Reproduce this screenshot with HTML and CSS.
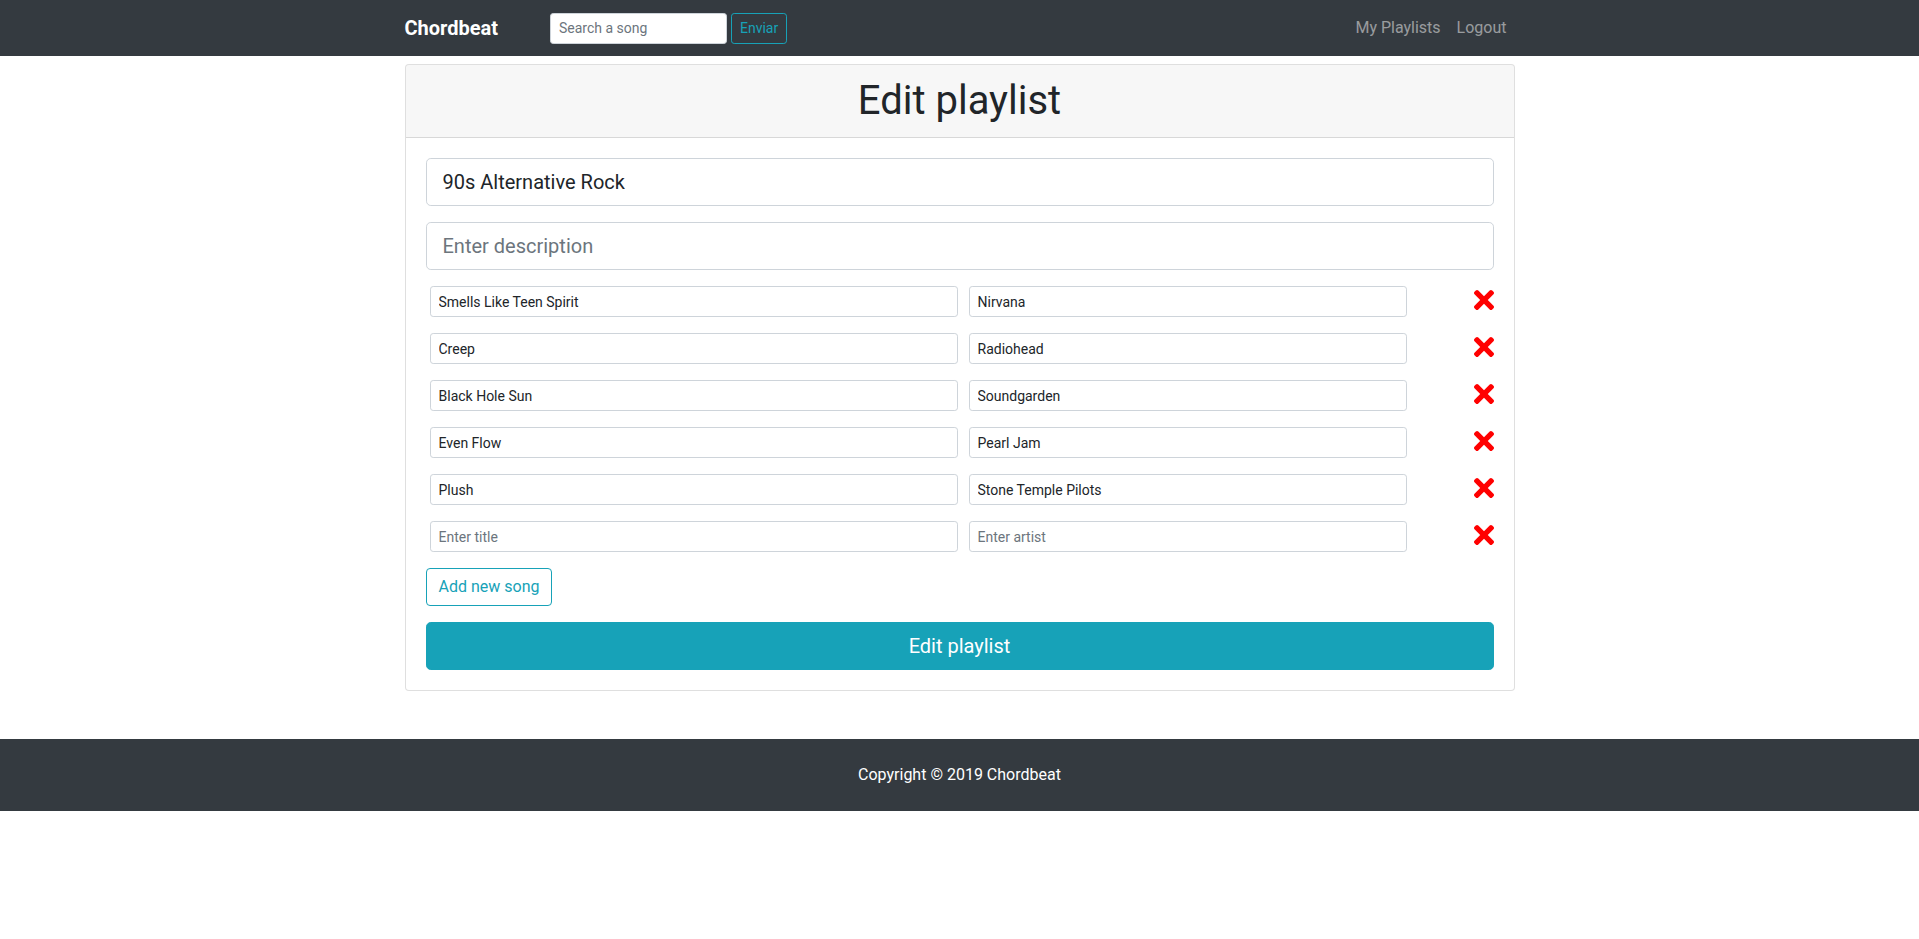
FILE: index.html
```html
<!DOCTYPE html>
<html lang="en">
<head>
<meta charset="utf-8">
<title>Chordbeat - Edit playlist</title>
<link rel="stylesheet" href="styles.css">
</head>
<body>
<nav class="navbar">
  <div class="nav-inner">
    <a class="brand" href="#">Chordbeat</a>
    <form class="search">
      <input class="search-input" type="text" placeholder="Search a song">
      <button class="btn-search" type="button">Enviar</button>
    </form>
    <ul class="nav-links">
      <li><a class="nav-link" href="#">My Playlists</a></li>
      <li><a class="nav-link" href="#">Logout</a></li>
    </ul>
  </div>
</nav>

<main class="container">
  <div class="card">
    <div class="card-header">
      <h1 class="card-title">Edit playlist</h1>
    </div>
    <div class="card-body">
      <input class="input-lg" type="text" value="90s Alternative Rock">
      <input class="input-lg" type="text" placeholder="Enter description">

      <div class="song-row">
        <input class="input-sm" type="text" value="Smells Like Teen Spirit">
        <input class="input-sm" type="text" value="Nirvana">
        <span class="remove"><svg viewBox="0 80 352 352" width="20" height="20"><path d="M242.72 256l100.07-100.07c12.28-12.28 12.28-32.19 0-44.48l-22.24-22.24c-12.28-12.28-32.19-12.28-44.48 0L176 189.28 75.93 89.21c-12.28-12.28-32.19-12.28-44.48 0L9.21 111.45c-12.28 12.28-12.28 32.19 0 44.48L109.28 256 9.21 356.07c-12.28 12.28-12.28 32.19 0 44.48l22.24 22.24c12.28 12.28 32.2 12.28 44.48 0L176 322.72l100.07 100.07c12.28 12.28 32.2 12.28 44.48 0l22.24-22.24c12.28-12.28 12.28-32.19 0-44.48L242.72 256z"/></svg></span>
      </div>
      <div class="song-row">
        <input class="input-sm" type="text" value="Creep">
        <input class="input-sm" type="text" value="Radiohead">
        <span class="remove"><svg viewBox="0 80 352 352" width="20" height="20"><path d="M242.72 256l100.07-100.07c12.28-12.28 12.28-32.19 0-44.48l-22.24-22.24c-12.28-12.28-32.19-12.28-44.48 0L176 189.28 75.93 89.21c-12.28-12.28-32.19-12.28-44.48 0L9.21 111.45c-12.28 12.28-12.28 32.19 0 44.48L109.28 256 9.21 356.07c-12.28 12.28-12.28 32.19 0 44.48l22.24 22.24c12.28 12.28 32.2 12.28 44.48 0L176 322.72l100.07 100.07c12.28 12.28 32.2 12.28 44.48 0l22.24-22.24c12.28-12.28 12.28-32.19 0-44.48L242.72 256z"/></svg></span>
      </div>
      <div class="song-row">
        <input class="input-sm" type="text" value="Black Hole Sun">
        <input class="input-sm" type="text" value="Soundgarden">
        <span class="remove"><svg viewBox="0 80 352 352" width="20" height="20"><path d="M242.72 256l100.07-100.07c12.28-12.28 12.28-32.19 0-44.48l-22.24-22.24c-12.28-12.28-32.19-12.28-44.48 0L176 189.28 75.93 89.21c-12.28-12.28-32.19-12.28-44.48 0L9.21 111.45c-12.28 12.28-12.28 32.19 0 44.48L109.28 256 9.21 356.07c-12.28 12.28-12.28 32.19 0 44.48l22.24 22.24c12.28 12.28 32.2 12.28 44.48 0L176 322.72l100.07 100.07c12.28 12.28 32.2 12.28 44.48 0l22.24-22.24c12.28-12.28 12.28-32.19 0-44.48L242.72 256z"/></svg></span>
      </div>
      <div class="song-row">
        <input class="input-sm" type="text" value="Even Flow">
        <input class="input-sm" type="text" value="Pearl Jam">
        <span class="remove"><svg viewBox="0 80 352 352" width="20" height="20"><path d="M242.72 256l100.07-100.07c12.28-12.28 12.28-32.19 0-44.48l-22.24-22.24c-12.28-12.28-32.19-12.28-44.48 0L176 189.28 75.93 89.21c-12.28-12.28-32.19-12.28-44.48 0L9.21 111.45c-12.28 12.28-12.28 32.19 0 44.48L109.28 256 9.21 356.07c-12.28 12.28-12.28 32.19 0 44.48l22.24 22.24c12.28 12.28 32.2 12.28 44.48 0L176 322.72l100.07 100.07c12.28 12.28 32.2 12.28 44.48 0l22.24-22.24c12.28-12.28 12.28-32.19 0-44.48L242.72 256z"/></svg></span>
      </div>
      <div class="song-row">
        <input class="input-sm" type="text" value="Plush">
        <input class="input-sm" type="text" value="Stone Temple Pilots">
        <span class="remove"><svg viewBox="0 80 352 352" width="20" height="20"><path d="M242.72 256l100.07-100.07c12.28-12.28 12.28-32.19 0-44.48l-22.24-22.24c-12.28-12.28-32.19-12.28-44.48 0L176 189.28 75.93 89.21c-12.28-12.28-32.19-12.28-44.48 0L9.21 111.45c-12.28 12.28-12.28 32.19 0 44.48L109.28 256 9.21 356.07c-12.28 12.28-12.28 32.19 0 44.48l22.24 22.24c12.28 12.28 32.2 12.28 44.48 0L176 322.72l100.07 100.07c12.28 12.28 32.2 12.28 44.48 0l22.24-22.24c12.28-12.28 12.28-32.19 0-44.48L242.72 256z"/></svg></span>
      </div>
      <div class="song-row">
        <input class="input-sm" type="text" placeholder="Enter title">
        <input class="input-sm" type="text" placeholder="Enter artist">
        <span class="remove"><svg viewBox="0 80 352 352" width="20" height="20"><path d="M242.72 256l100.07-100.07c12.28-12.28 12.28-32.19 0-44.48l-22.24-22.24c-12.28-12.28-32.19-12.28-44.48 0L176 189.28 75.93 89.21c-12.28-12.28-32.19-12.28-44.48 0L9.21 111.45c-12.28 12.28-12.28 32.19 0 44.48L109.28 256 9.21 356.07c-12.28 12.28-12.28 32.19 0 44.48l22.24 22.24c12.28 12.28 32.2 12.28 44.48 0L176 322.72l100.07 100.07c12.28 12.28 32.2 12.28 44.48 0l22.24-22.24c12.28-12.28 12.28-32.19 0-44.48L242.72 256z"/></svg></span>
      </div>

      <button class="btn-add" type="button">Add new song</button>
      <button class="btn-submit" type="button">Edit playlist</button>
    </div>
  </div>
</main>

<footer class="footer">Copyright © 2019 Chordbeat</footer>
</body>
</html>
```

FILE: styles.css
```css
* {
  box-sizing: border-box;
}

html, body {
  margin: 0;
  padding: 0;
}

body {
  font-family: Roboto, "Liberation Sans", Arial, sans-serif;
  font-size: 16px;
  line-height: 1.5;
  color: #212529;
  background: #ffffff;
}

/* Navbar */
.navbar {
  background: #343a40;
  padding: 8px 0;
}

.nav-inner {
  width: 1140px;
  margin: 0 auto;
  padding: 0 15px;
  display: flex;
  align-items: center;
}

.brand {
  font-size: 20px;
  font-weight: 700;
  line-height: 30px;
  padding: 5px 0;
  color: #ffffff;
  text-decoration: none;
  margin-right: 52px;
}

.search {
  display: flex;
  align-items: center;
  margin: 0;
}

.search-input {
  width: 177px;
  height: 31px;
  padding: 4px 8px;
  font-family: inherit;
  font-size: 14px;
  line-height: 1.5;
  color: #495057;
  background: #ffffff;
  border: 1px solid #ced4da;
  border-radius: 3.2px;
  margin-right: 4px;
}

.search-input::placeholder {
  color: #6c757d;
}

.btn-search {
  height: 31px;
  padding: 4px 8px;
  font-family: inherit;
  font-size: 14px;
  line-height: 1.5;
  color: #17a2b8;
  background: transparent;
  border: 1px solid #17a2b8;
  border-radius: 3.2px;
}

.nav-links {
  list-style: none;
  margin: 0 0 0 auto;
  padding: 0;
  display: flex;
}

.nav-link {
  display: block;
  padding: 8px 8px;
  color: rgba(255, 255, 255, 0.5);
  text-decoration: none;
  font-size: 16px;
  line-height: 24px;
}

/* Main */
.container {
  width: 1140px;
  margin: 8px auto 48px;
  padding: 0 15px;
}

.card {
  border: 1px solid rgba(0, 0, 0, 0.125);
  border-radius: 4px;
  background: #ffffff;
}

.card-header {
  background: rgba(0, 0, 0, 0.03);
  border-bottom: 1px solid rgba(0, 0, 0, 0.125);
  padding: 12px 20px;
  border-radius: 3px 3px 0 0;
}

.card-title {
  margin: 0;
  font-size: 40px;
  font-weight: 400;
  line-height: 1.2;
  text-align: center;
  color: #212529;
}

.card-body {
  padding: 20px;
  display: flex;
  flex-direction: column;
  gap: 16px;
}

.input-lg {
  width: 100%;
  height: 48px;
  padding: 8px 16px;
  font-family: inherit;
  font-size: 20px;
  line-height: 1.5;
  color: #212529;
  background: #ffffff;
  border: 1px solid #ced4da;
  border-radius: 4.8px;
}

.input-lg::placeholder {
  color: #6c757d;
}

.song-row {
  display: grid;
  grid-template-columns: 528px 438px 1fr;
  column-gap: 11px;
  padding-left: 4px;
  align-items: center;
}

.input-sm {
  width: 100%;
  height: 31px;
  padding: 4px 8px;
  font-family: inherit;
  font-size: 14px;
  line-height: 1.5;
  color: #212529;
  background: #ffffff;
  border: 1px solid #ced4da;
  border-radius: 3.2px;
}

.input-sm::placeholder {
  color: #6c757d;
}

.remove {
  justify-self: end;
  align-self: start;
  margin-top: 4px;
  display: flex;
  align-items: center;
  width: 20px;
  height: 20px;
}

.remove svg {
  display: block;
  fill: #ff0000;
}

.btn-add {
  align-self: flex-start;
  height: 38px;
  padding: 6px 12px;
  font-family: inherit;
  font-size: 16px;
  line-height: 1.5;
  color: #17a2b8;
  background: transparent;
  border: 1px solid #17a2b8;
  border-radius: 4px;
}

.btn-submit {
  width: 100%;
  height: 48px;
  padding: 8px 16px;
  font-family: inherit;
  font-size: 20px;
  line-height: 1.5;
  color: #ffffff;
  background: #17a2b8;
  border: 1px solid #17a2b8;
  border-radius: 4.8px;
}

/* Footer */
.footer {
  background: #343a40;
  color: #ffffff;
  text-align: center;
  padding: 24px 0;
  font-size: 16px;
  line-height: 24px;
}
```
